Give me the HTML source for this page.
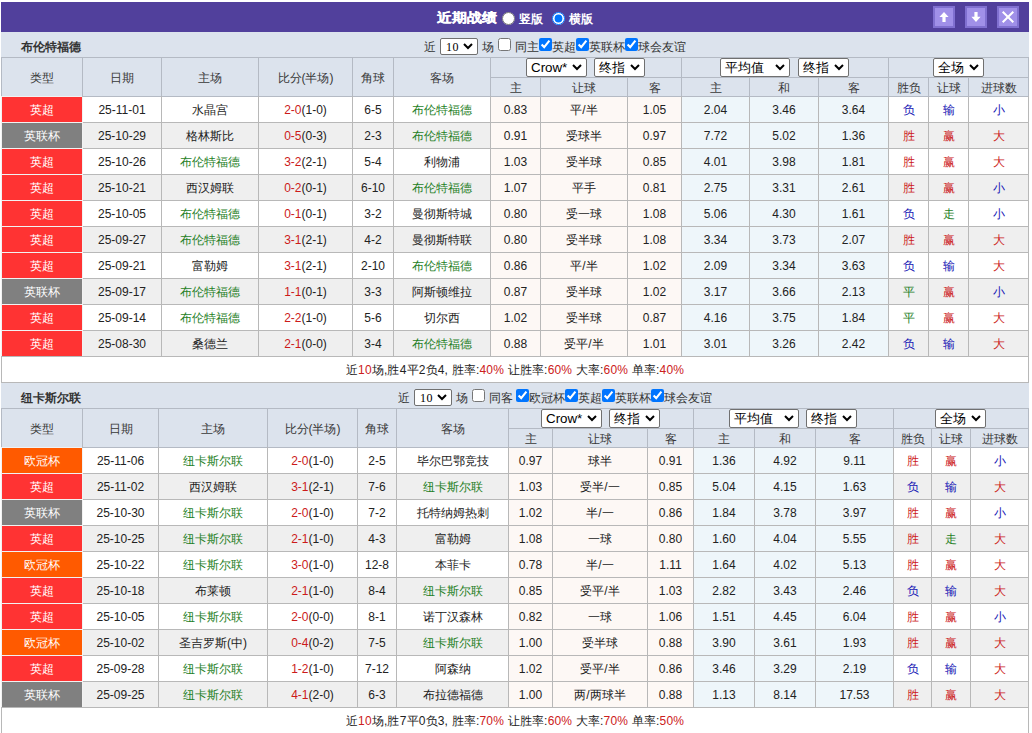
<!DOCTYPE html><html><head><meta charset="utf-8"><style>

*{box-sizing:border-box}
html,body{margin:0;padding:0;background:#fff}
body{width:1032px;height:733px;overflow:hidden;position:relative;font-family:"Liberation Sans",sans-serif;font-size:12px;color:#222}
.top{position:absolute;left:1px;top:2px;width:1028px;height:30px;background:#51409c;color:#fff}
.ttl{position:absolute;left:436px;top:1px;height:30px;line-height:30px;font-size:15px;font-weight:bold;white-space:nowrap;transform:scaleY(0.87);-webkit-text-stroke:0.3px #fff}
.rad{position:absolute;top:9px;white-space:nowrap;line-height:17px;font-size:12px;font-weight:bold}
.rad input{margin:0 1px 0 0;width:13px;height:13px;vertical-align:-2px}
.btn{position:absolute;top:4px;width:22px;height:22px;background:#a090e8;border:2px solid #8070d0}
.btn svg{position:absolute;left:0;top:0}
.sh{position:absolute;left:1px;width:1028px;height:25px;background:#dce3ed}
.tm{position:absolute;left:20px;top:8px;line-height:14px;font-weight:bold;color:#333}
.flt{position:absolute;top:6px;white-space:nowrap;line-height:17px;color:#333}
.flt input{margin:0;width:13px;height:13px;vertical-align:0;position:relative;top:0}
.flt input.cu{margin-left:1px}
.hb{position:absolute;left:1px;width:1028px;background:#dce3ed}
.c{position:absolute;text-align:center;white-space:nowrap;overflow:hidden;padding-top:1px}
.h{color:#383838}
.b{position:absolute;background:#b8b8b8}
.grp{position:absolute;height:19px;text-align:center;white-space:nowrap;padding-top:1px}
.sel{position:absolute;background:#fff;border:1px solid #707070;border-radius:2px;color:#000;white-space:nowrap;text-align:left}
.chev{position:absolute;right:4px}
select{font-family:"Liberation Sans",sans-serif;font-size:13px;height:18px;padding:0;margin:0;vertical-align:top;background:#fff;color:#000}
select.n{width:38px;height:17px;font-size:12px}
.lg{color:#fff}
.r{background:#ff3333}.g{background:#808080}.o{background:#ff5a00}
.gn{color:#1f7f1f}
i{font-style:normal;color:#cc1a1a}
.cw{background:#fdf8f5}
.av{background:#eef6fa}
.rd{color:#cc1a1a}.bl{color:#1414b4}.gr{color:#1f7f1f}
.sm{background:#fff}
.sm b{font-weight:normal;color:#cc2020}
.sm{letter-spacing:0.18px}

</style></head><body>
<div class="top"><div class="ttl">近期战绩</div>
<div class="rad" style="left:501px"><input type="radio" name="v"> 竖版</div>
<div class="rad" style="left:551px"><input type="radio" name="v" checked> 横版</div>
<div class="btn" style="left:932px"><svg width="18" height="18" viewBox="0 0 18 18"><path d="M9 3.9 L13.6 9.1 L10.6 9.1 L10.6 14 L7.4 14 L7.4 9.1 L4.4 9.1 Z" fill="#fff"/></svg></div><div class="btn" style="left:964px"><svg width="18" height="18" viewBox="0 0 18 18"><path d="M9 14 L13.6 8.8 L10.6 8.8 L10.6 3.9 L7.4 3.9 L7.4 8.8 L4.4 8.8 Z" fill="#fff"/></svg></div><div class="btn" style="left:996px"><svg width="18" height="18" viewBox="0 0 18 18"><path d="M3.7 3.7 L14.3 14.3 M14.3 3.7 L3.7 14.3" stroke="#fff" stroke-width="2"/></svg></div>
</div>
<div class="sh" style="top:32px"><span class="tm">布伦特福德</span><div class="flt" style="left:423px">近<span style="display:inline-block;width:46px"></span>场 <input type="checkbox" class="cu"> 同主<input type="checkbox" checked>英超<input type="checkbox" checked>英联杯<input type="checkbox" checked>球会友谊</div></div>
<div class="sel" style="left:440px;top:38px;width:38px;height:17px;line-height:15px;font-size:12px;padding-left:5px;font-family:'Liberation Serif',serif"><span style="position:relative;top:1px;letter-spacing:0.6px">10</span><svg class="chev" width="10" height="7" viewBox="0 0 10 7" style="top:4px"><path d="M1 1 L5 5 L9 1" stroke="#000" stroke-width="2" fill="none"/></svg></div>
<div class="hb" style="top:57px;height:39px"></div>
<div class="c h" style="left:2px;top:58px;width:80px;height:38px;line-height:38px">类型</div>
<div class="c h" style="left:83px;top:58px;width:78px;height:38px;line-height:38px">日期</div>
<div class="c h" style="left:162px;top:58px;width:96px;height:38px;line-height:38px">主场</div>
<div class="c h" style="left:259px;top:58px;width:93px;height:38px;line-height:38px">比分(半场)</div>
<div class="c h" style="left:353px;top:58px;width:40px;height:38px;line-height:38px">角球</div>
<div class="c h" style="left:394px;top:58px;width:96px;height:38px;line-height:38px">客场</div>
<div class="sel" style="left:526px;top:58px;width:61px;height:19px;line-height:17px;font-size:13.33px;padding-left:4px">Crow*<svg class="chev" width="10" height="7" viewBox="0 0 10 7" style="top:5px"><path d="M1 1 L5 5 L9 1" stroke="#000" stroke-width="2" fill="none"/></svg></div>
<div class="sel" style="left:594px;top:58px;width:51px;height:19px;line-height:17px;font-size:13.33px;padding-left:4px">终指<svg class="chev" width="10" height="7" viewBox="0 0 10 7" style="top:5px"><path d="M1 1 L5 5 L9 1" stroke="#000" stroke-width="2" fill="none"/></svg></div>
<div class="sel" style="left:720px;top:58px;width:70px;height:19px;line-height:17px;font-size:13.33px;padding-left:4px">平均值<svg class="chev" width="10" height="7" viewBox="0 0 10 7" style="top:5px"><path d="M1 1 L5 5 L9 1" stroke="#000" stroke-width="2" fill="none"/></svg></div>
<div class="sel" style="left:798px;top:58px;width:51px;height:19px;line-height:17px;font-size:13.33px;padding-left:4px">终指<svg class="chev" width="10" height="7" viewBox="0 0 10 7" style="top:5px"><path d="M1 1 L5 5 L9 1" stroke="#000" stroke-width="2" fill="none"/></svg></div>
<div class="sel" style="left:933px;top:58px;width:51px;height:19px;line-height:17px;font-size:13.33px;padding-left:4px">全场<svg class="chev" width="10" height="7" viewBox="0 0 10 7" style="top:5px"><path d="M1 1 L5 5 L9 1" stroke="#000" stroke-width="2" fill="none"/></svg></div>
<div class="c h" style="left:491px;top:78px;width:49px;height:18px;line-height:18px">主</div>
<div class="c h" style="left:541px;top:78px;width:86px;height:18px;line-height:18px">让球</div>
<div class="c h" style="left:628px;top:78px;width:53px;height:18px;line-height:18px">客</div>
<div class="c h" style="left:682px;top:78px;width:67px;height:18px;line-height:18px">主</div>
<div class="c h" style="left:750px;top:78px;width:68px;height:18px;line-height:18px">和</div>
<div class="c h" style="left:819px;top:78px;width:69px;height:18px;line-height:18px">客</div>
<div class="c h" style="left:889px;top:78px;width:39px;height:18px;line-height:18px">胜负</div>
<div class="c h" style="left:929px;top:78px;width:39px;height:18px;line-height:18px">让球</div>
<div class="c h" style="left:969px;top:78px;width:59px;height:18px;line-height:18px">进球数</div>
<div class="c lg r" style="left:2px;top:97px;width:80px;height:25px;line-height:25px">英超</div>
<div class="c" style="left:83px;top:97px;width:78px;height:25px;line-height:25px">25-11-01</div>
<div class="c" style="left:162px;top:97px;width:96px;height:25px;line-height:25px">水晶宫</div>
<div class="c" style="left:259px;top:97px;width:93px;height:25px;line-height:25px"><i>2-0</i>(1-0)</div>
<div class="c" style="left:353px;top:97px;width:40px;height:25px;line-height:25px">6-5</div>
<div class="c gn" style="left:394px;top:97px;width:96px;height:25px;line-height:25px">布伦特福德</div>
<div class="c cw" style="left:491px;top:97px;width:49px;height:25px;line-height:25px">0.83</div>
<div class="c cw" style="left:541px;top:97px;width:86px;height:25px;line-height:25px">平/半</div>
<div class="c cw" style="left:628px;top:97px;width:53px;height:25px;line-height:25px">1.05</div>
<div class="c av" style="left:682px;top:97px;width:67px;height:25px;line-height:25px">2.04</div>
<div class="c av" style="left:750px;top:97px;width:68px;height:25px;line-height:25px">3.46</div>
<div class="c av" style="left:819px;top:97px;width:69px;height:25px;line-height:25px">3.64</div>
<div class="c rs bl" style="left:889px;top:97px;width:39px;height:25px;line-height:25px">负</div>
<div class="c rs bl" style="left:929px;top:97px;width:39px;height:25px;line-height:25px">输</div>
<div class="c rs bl" style="left:969px;top:97px;width:59px;height:25px;line-height:25px">小</div>
<div class="c lg g" style="left:2px;top:123px;width:80px;height:25px;line-height:25px">英联杯</div>
<div class="c" style="left:83px;top:123px;width:78px;height:25px;line-height:25px;background:#efefef">25-10-29</div>
<div class="c" style="left:162px;top:123px;width:96px;height:25px;line-height:25px;background:#efefef">格林斯比</div>
<div class="c" style="left:259px;top:123px;width:93px;height:25px;line-height:25px;background:#efefef"><i>0-5</i>(0-3)</div>
<div class="c" style="left:353px;top:123px;width:40px;height:25px;line-height:25px;background:#efefef">2-3</div>
<div class="c gn" style="left:394px;top:123px;width:96px;height:25px;line-height:25px;background:#efefef">布伦特福德</div>
<div class="c cw" style="left:491px;top:123px;width:49px;height:25px;line-height:25px">0.91</div>
<div class="c cw" style="left:541px;top:123px;width:86px;height:25px;line-height:25px">受球半</div>
<div class="c cw" style="left:628px;top:123px;width:53px;height:25px;line-height:25px">0.97</div>
<div class="c av" style="left:682px;top:123px;width:67px;height:25px;line-height:25px">7.72</div>
<div class="c av" style="left:750px;top:123px;width:68px;height:25px;line-height:25px">5.02</div>
<div class="c av" style="left:819px;top:123px;width:69px;height:25px;line-height:25px">1.36</div>
<div class="c rs rd" style="left:889px;top:123px;width:39px;height:25px;line-height:25px;background:#efefef">胜</div>
<div class="c rs rd" style="left:929px;top:123px;width:39px;height:25px;line-height:25px;background:#efefef">赢</div>
<div class="c rs rd" style="left:969px;top:123px;width:59px;height:25px;line-height:25px;background:#efefef">大</div>
<div class="c lg r" style="left:2px;top:149px;width:80px;height:25px;line-height:25px">英超</div>
<div class="c" style="left:83px;top:149px;width:78px;height:25px;line-height:25px">25-10-26</div>
<div class="c gn" style="left:162px;top:149px;width:96px;height:25px;line-height:25px">布伦特福德</div>
<div class="c" style="left:259px;top:149px;width:93px;height:25px;line-height:25px"><i>3-2</i>(2-1)</div>
<div class="c" style="left:353px;top:149px;width:40px;height:25px;line-height:25px">5-4</div>
<div class="c" style="left:394px;top:149px;width:96px;height:25px;line-height:25px">利物浦</div>
<div class="c cw" style="left:491px;top:149px;width:49px;height:25px;line-height:25px">1.03</div>
<div class="c cw" style="left:541px;top:149px;width:86px;height:25px;line-height:25px">受半球</div>
<div class="c cw" style="left:628px;top:149px;width:53px;height:25px;line-height:25px">0.85</div>
<div class="c av" style="left:682px;top:149px;width:67px;height:25px;line-height:25px">4.01</div>
<div class="c av" style="left:750px;top:149px;width:68px;height:25px;line-height:25px">3.98</div>
<div class="c av" style="left:819px;top:149px;width:69px;height:25px;line-height:25px">1.81</div>
<div class="c rs rd" style="left:889px;top:149px;width:39px;height:25px;line-height:25px">胜</div>
<div class="c rs rd" style="left:929px;top:149px;width:39px;height:25px;line-height:25px">赢</div>
<div class="c rs rd" style="left:969px;top:149px;width:59px;height:25px;line-height:25px">大</div>
<div class="c lg r" style="left:2px;top:175px;width:80px;height:25px;line-height:25px">英超</div>
<div class="c" style="left:83px;top:175px;width:78px;height:25px;line-height:25px;background:#efefef">25-10-21</div>
<div class="c" style="left:162px;top:175px;width:96px;height:25px;line-height:25px;background:#efefef">西汉姆联</div>
<div class="c" style="left:259px;top:175px;width:93px;height:25px;line-height:25px;background:#efefef"><i>0-2</i>(0-1)</div>
<div class="c" style="left:353px;top:175px;width:40px;height:25px;line-height:25px;background:#efefef">6-10</div>
<div class="c gn" style="left:394px;top:175px;width:96px;height:25px;line-height:25px;background:#efefef">布伦特福德</div>
<div class="c cw" style="left:491px;top:175px;width:49px;height:25px;line-height:25px">1.07</div>
<div class="c cw" style="left:541px;top:175px;width:86px;height:25px;line-height:25px">平手</div>
<div class="c cw" style="left:628px;top:175px;width:53px;height:25px;line-height:25px">0.81</div>
<div class="c av" style="left:682px;top:175px;width:67px;height:25px;line-height:25px">2.75</div>
<div class="c av" style="left:750px;top:175px;width:68px;height:25px;line-height:25px">3.31</div>
<div class="c av" style="left:819px;top:175px;width:69px;height:25px;line-height:25px">2.61</div>
<div class="c rs rd" style="left:889px;top:175px;width:39px;height:25px;line-height:25px;background:#efefef">胜</div>
<div class="c rs rd" style="left:929px;top:175px;width:39px;height:25px;line-height:25px;background:#efefef">赢</div>
<div class="c rs bl" style="left:969px;top:175px;width:59px;height:25px;line-height:25px;background:#efefef">小</div>
<div class="c lg r" style="left:2px;top:201px;width:80px;height:25px;line-height:25px">英超</div>
<div class="c" style="left:83px;top:201px;width:78px;height:25px;line-height:25px">25-10-05</div>
<div class="c gn" style="left:162px;top:201px;width:96px;height:25px;line-height:25px">布伦特福德</div>
<div class="c" style="left:259px;top:201px;width:93px;height:25px;line-height:25px"><i>0-1</i>(0-1)</div>
<div class="c" style="left:353px;top:201px;width:40px;height:25px;line-height:25px">3-2</div>
<div class="c" style="left:394px;top:201px;width:96px;height:25px;line-height:25px">曼彻斯特城</div>
<div class="c cw" style="left:491px;top:201px;width:49px;height:25px;line-height:25px">0.80</div>
<div class="c cw" style="left:541px;top:201px;width:86px;height:25px;line-height:25px">受一球</div>
<div class="c cw" style="left:628px;top:201px;width:53px;height:25px;line-height:25px">1.08</div>
<div class="c av" style="left:682px;top:201px;width:67px;height:25px;line-height:25px">5.06</div>
<div class="c av" style="left:750px;top:201px;width:68px;height:25px;line-height:25px">4.30</div>
<div class="c av" style="left:819px;top:201px;width:69px;height:25px;line-height:25px">1.61</div>
<div class="c rs bl" style="left:889px;top:201px;width:39px;height:25px;line-height:25px">负</div>
<div class="c rs gr" style="left:929px;top:201px;width:39px;height:25px;line-height:25px">走</div>
<div class="c rs bl" style="left:969px;top:201px;width:59px;height:25px;line-height:25px">小</div>
<div class="c lg r" style="left:2px;top:227px;width:80px;height:25px;line-height:25px">英超</div>
<div class="c" style="left:83px;top:227px;width:78px;height:25px;line-height:25px;background:#efefef">25-09-27</div>
<div class="c gn" style="left:162px;top:227px;width:96px;height:25px;line-height:25px;background:#efefef">布伦特福德</div>
<div class="c" style="left:259px;top:227px;width:93px;height:25px;line-height:25px;background:#efefef"><i>3-1</i>(2-1)</div>
<div class="c" style="left:353px;top:227px;width:40px;height:25px;line-height:25px;background:#efefef">4-2</div>
<div class="c" style="left:394px;top:227px;width:96px;height:25px;line-height:25px;background:#efefef">曼彻斯特联</div>
<div class="c cw" style="left:491px;top:227px;width:49px;height:25px;line-height:25px">0.80</div>
<div class="c cw" style="left:541px;top:227px;width:86px;height:25px;line-height:25px">受半球</div>
<div class="c cw" style="left:628px;top:227px;width:53px;height:25px;line-height:25px">1.08</div>
<div class="c av" style="left:682px;top:227px;width:67px;height:25px;line-height:25px">3.34</div>
<div class="c av" style="left:750px;top:227px;width:68px;height:25px;line-height:25px">3.73</div>
<div class="c av" style="left:819px;top:227px;width:69px;height:25px;line-height:25px">2.07</div>
<div class="c rs rd" style="left:889px;top:227px;width:39px;height:25px;line-height:25px;background:#efefef">胜</div>
<div class="c rs rd" style="left:929px;top:227px;width:39px;height:25px;line-height:25px;background:#efefef">赢</div>
<div class="c rs rd" style="left:969px;top:227px;width:59px;height:25px;line-height:25px;background:#efefef">大</div>
<div class="c lg r" style="left:2px;top:253px;width:80px;height:25px;line-height:25px">英超</div>
<div class="c" style="left:83px;top:253px;width:78px;height:25px;line-height:25px">25-09-21</div>
<div class="c" style="left:162px;top:253px;width:96px;height:25px;line-height:25px">富勒姆</div>
<div class="c" style="left:259px;top:253px;width:93px;height:25px;line-height:25px"><i>3-1</i>(2-1)</div>
<div class="c" style="left:353px;top:253px;width:40px;height:25px;line-height:25px">2-10</div>
<div class="c gn" style="left:394px;top:253px;width:96px;height:25px;line-height:25px">布伦特福德</div>
<div class="c cw" style="left:491px;top:253px;width:49px;height:25px;line-height:25px">0.86</div>
<div class="c cw" style="left:541px;top:253px;width:86px;height:25px;line-height:25px">平/半</div>
<div class="c cw" style="left:628px;top:253px;width:53px;height:25px;line-height:25px">1.02</div>
<div class="c av" style="left:682px;top:253px;width:67px;height:25px;line-height:25px">2.09</div>
<div class="c av" style="left:750px;top:253px;width:68px;height:25px;line-height:25px">3.34</div>
<div class="c av" style="left:819px;top:253px;width:69px;height:25px;line-height:25px">3.63</div>
<div class="c rs bl" style="left:889px;top:253px;width:39px;height:25px;line-height:25px">负</div>
<div class="c rs bl" style="left:929px;top:253px;width:39px;height:25px;line-height:25px">输</div>
<div class="c rs rd" style="left:969px;top:253px;width:59px;height:25px;line-height:25px">大</div>
<div class="c lg g" style="left:2px;top:279px;width:80px;height:25px;line-height:25px">英联杯</div>
<div class="c" style="left:83px;top:279px;width:78px;height:25px;line-height:25px;background:#efefef">25-09-17</div>
<div class="c gn" style="left:162px;top:279px;width:96px;height:25px;line-height:25px;background:#efefef">布伦特福德</div>
<div class="c" style="left:259px;top:279px;width:93px;height:25px;line-height:25px;background:#efefef"><i>1-1</i>(0-1)</div>
<div class="c" style="left:353px;top:279px;width:40px;height:25px;line-height:25px;background:#efefef">3-3</div>
<div class="c" style="left:394px;top:279px;width:96px;height:25px;line-height:25px;background:#efefef">阿斯顿维拉</div>
<div class="c cw" style="left:491px;top:279px;width:49px;height:25px;line-height:25px">0.87</div>
<div class="c cw" style="left:541px;top:279px;width:86px;height:25px;line-height:25px">受半球</div>
<div class="c cw" style="left:628px;top:279px;width:53px;height:25px;line-height:25px">1.02</div>
<div class="c av" style="left:682px;top:279px;width:67px;height:25px;line-height:25px">3.17</div>
<div class="c av" style="left:750px;top:279px;width:68px;height:25px;line-height:25px">3.66</div>
<div class="c av" style="left:819px;top:279px;width:69px;height:25px;line-height:25px">2.13</div>
<div class="c rs gr" style="left:889px;top:279px;width:39px;height:25px;line-height:25px;background:#efefef">平</div>
<div class="c rs rd" style="left:929px;top:279px;width:39px;height:25px;line-height:25px;background:#efefef">赢</div>
<div class="c rs bl" style="left:969px;top:279px;width:59px;height:25px;line-height:25px;background:#efefef">小</div>
<div class="c lg r" style="left:2px;top:305px;width:80px;height:25px;line-height:25px">英超</div>
<div class="c" style="left:83px;top:305px;width:78px;height:25px;line-height:25px">25-09-14</div>
<div class="c gn" style="left:162px;top:305px;width:96px;height:25px;line-height:25px">布伦特福德</div>
<div class="c" style="left:259px;top:305px;width:93px;height:25px;line-height:25px"><i>2-2</i>(1-0)</div>
<div class="c" style="left:353px;top:305px;width:40px;height:25px;line-height:25px">5-6</div>
<div class="c" style="left:394px;top:305px;width:96px;height:25px;line-height:25px">切尔西</div>
<div class="c cw" style="left:491px;top:305px;width:49px;height:25px;line-height:25px">1.02</div>
<div class="c cw" style="left:541px;top:305px;width:86px;height:25px;line-height:25px">受半球</div>
<div class="c cw" style="left:628px;top:305px;width:53px;height:25px;line-height:25px">0.87</div>
<div class="c av" style="left:682px;top:305px;width:67px;height:25px;line-height:25px">4.16</div>
<div class="c av" style="left:750px;top:305px;width:68px;height:25px;line-height:25px">3.75</div>
<div class="c av" style="left:819px;top:305px;width:69px;height:25px;line-height:25px">1.84</div>
<div class="c rs gr" style="left:889px;top:305px;width:39px;height:25px;line-height:25px">平</div>
<div class="c rs rd" style="left:929px;top:305px;width:39px;height:25px;line-height:25px">赢</div>
<div class="c rs rd" style="left:969px;top:305px;width:59px;height:25px;line-height:25px">大</div>
<div class="c lg r" style="left:2px;top:331px;width:80px;height:25px;line-height:25px">英超</div>
<div class="c" style="left:83px;top:331px;width:78px;height:25px;line-height:25px;background:#efefef">25-08-30</div>
<div class="c" style="left:162px;top:331px;width:96px;height:25px;line-height:25px;background:#efefef">桑德兰</div>
<div class="c" style="left:259px;top:331px;width:93px;height:25px;line-height:25px;background:#efefef"><i>2-1</i>(0-0)</div>
<div class="c" style="left:353px;top:331px;width:40px;height:25px;line-height:25px;background:#efefef">3-4</div>
<div class="c gn" style="left:394px;top:331px;width:96px;height:25px;line-height:25px;background:#efefef">布伦特福德</div>
<div class="c cw" style="left:491px;top:331px;width:49px;height:25px;line-height:25px">0.88</div>
<div class="c cw" style="left:541px;top:331px;width:86px;height:25px;line-height:25px">受平/半</div>
<div class="c cw" style="left:628px;top:331px;width:53px;height:25px;line-height:25px">1.01</div>
<div class="c av" style="left:682px;top:331px;width:67px;height:25px;line-height:25px">3.01</div>
<div class="c av" style="left:750px;top:331px;width:68px;height:25px;line-height:25px">3.26</div>
<div class="c av" style="left:819px;top:331px;width:69px;height:25px;line-height:25px">2.42</div>
<div class="c rs bl" style="left:889px;top:331px;width:39px;height:25px;line-height:25px;background:#efefef">负</div>
<div class="c rs bl" style="left:929px;top:331px;width:39px;height:25px;line-height:25px;background:#efefef">输</div>
<div class="c rs rd" style="left:969px;top:331px;width:59px;height:25px;line-height:25px;background:#efefef">大</div>
<div class="c sm" style="left:2px;top:357px;width:1026px;height:25px;line-height:25px">近<b>10</b>场,胜4平2负4, 胜率:<b>40%</b> 让胜率:<b>60%</b> 大率:<b>60%</b> 单率:<b>40%</b></div>
<div class="b" style="left:1px;top:57px;width:1028px;height:1px;background:#b4bac4"></div>
<div class="b" style="left:490px;top:77px;width:539px;height:1px;background:#b4bac4"></div>
<div class="b" style="left:82px;top:96px;width:947px;height:1px;background:#b4bac4"></div>
<div class="b" style="left:1px;top:96px;width:81px;height:1px;background:#f2f2f2"></div>
<div class="b" style="left:82px;top:122px;width:947px;height:1px"></div>
<div class="b" style="left:1px;top:122px;width:81px;height:1px;background:#f2f2f2"></div>
<div class="b" style="left:82px;top:148px;width:947px;height:1px"></div>
<div class="b" style="left:1px;top:148px;width:81px;height:1px;background:#f2f2f2"></div>
<div class="b" style="left:82px;top:174px;width:947px;height:1px"></div>
<div class="b" style="left:1px;top:174px;width:81px;height:1px;background:#f2f2f2"></div>
<div class="b" style="left:82px;top:200px;width:947px;height:1px"></div>
<div class="b" style="left:1px;top:200px;width:81px;height:1px;background:#f2f2f2"></div>
<div class="b" style="left:82px;top:226px;width:947px;height:1px"></div>
<div class="b" style="left:1px;top:226px;width:81px;height:1px;background:#f2f2f2"></div>
<div class="b" style="left:82px;top:252px;width:947px;height:1px"></div>
<div class="b" style="left:1px;top:252px;width:81px;height:1px;background:#f2f2f2"></div>
<div class="b" style="left:82px;top:278px;width:947px;height:1px"></div>
<div class="b" style="left:1px;top:278px;width:81px;height:1px;background:#f2f2f2"></div>
<div class="b" style="left:82px;top:304px;width:947px;height:1px"></div>
<div class="b" style="left:1px;top:304px;width:81px;height:1px;background:#f2f2f2"></div>
<div class="b" style="left:82px;top:330px;width:947px;height:1px"></div>
<div class="b" style="left:1px;top:330px;width:81px;height:1px;background:#f2f2f2"></div>
<div class="b" style="left:1px;top:356px;width:1028px;height:1px"></div>
<div class="b" style="left:1px;top:382px;width:1028px;height:1px"></div>
<div class="b" style="left:1px;top:57px;width:1px;height:39px;background:#b4bac4"></div>
<div class="b" style="left:1px;top:356px;width:1px;height:27px"></div>
<div class="b" style="left:1px;top:96px;width:1px;height:260px;background:#f2f2f2"></div>
<div class="b" style="left:82px;top:57px;width:1px;height:39px;background:#b4bac4"></div>
<div class="b" style="left:82px;top:96px;width:1px;height:1px"></div>
<div class="b" style="left:82px;top:356px;width:1px;height:1px"></div>
<div class="b" style="left:82px;top:97px;width:1px;height:259px;background:#f2f2f2"></div>
<div class="b" style="left:161px;top:57px;width:1px;height:39px;background:#b4bac4"></div>
<div class="b" style="left:161px;top:96px;width:1px;height:261px"></div>
<div class="b" style="left:258px;top:57px;width:1px;height:39px;background:#b4bac4"></div>
<div class="b" style="left:258px;top:96px;width:1px;height:261px"></div>
<div class="b" style="left:352px;top:57px;width:1px;height:39px;background:#b4bac4"></div>
<div class="b" style="left:352px;top:96px;width:1px;height:261px"></div>
<div class="b" style="left:393px;top:57px;width:1px;height:39px;background:#b4bac4"></div>
<div class="b" style="left:393px;top:96px;width:1px;height:261px"></div>
<div class="b" style="left:490px;top:57px;width:1px;height:39px;background:#b4bac4"></div>
<div class="b" style="left:490px;top:96px;width:1px;height:261px"></div>
<div class="b" style="left:540px;top:78px;width:1px;height:18px;background:#b4bac4"></div>
<div class="b" style="left:540px;top:97px;width:1px;height:260px"></div>
<div class="b" style="left:627px;top:78px;width:1px;height:18px;background:#b4bac4"></div>
<div class="b" style="left:627px;top:97px;width:1px;height:260px"></div>
<div class="b" style="left:681px;top:57px;width:1px;height:39px;background:#b4bac4"></div>
<div class="b" style="left:681px;top:96px;width:1px;height:261px"></div>
<div class="b" style="left:749px;top:78px;width:1px;height:18px;background:#b4bac4"></div>
<div class="b" style="left:749px;top:97px;width:1px;height:260px"></div>
<div class="b" style="left:818px;top:78px;width:1px;height:18px;background:#b4bac4"></div>
<div class="b" style="left:818px;top:97px;width:1px;height:260px"></div>
<div class="b" style="left:888px;top:57px;width:1px;height:39px;background:#b4bac4"></div>
<div class="b" style="left:888px;top:96px;width:1px;height:261px"></div>
<div class="b" style="left:928px;top:78px;width:1px;height:18px;background:#b4bac4"></div>
<div class="b" style="left:928px;top:97px;width:1px;height:260px"></div>
<div class="b" style="left:968px;top:78px;width:1px;height:18px;background:#b4bac4"></div>
<div class="b" style="left:968px;top:97px;width:1px;height:260px"></div>
<div class="b" style="left:1028px;top:57px;width:1px;height:39px;background:#b4bac4"></div>
<div class="b" style="left:1028px;top:96px;width:1px;height:287px"></div>
<div class="sh" style="top:383px"><span class="tm">纽卡斯尔联</span><div class="flt" style="left:397px">近<span style="display:inline-block;width:46px"></span>场 <input type="checkbox" class="cu"> 同客 <input type="checkbox" checked>欧冠杯<input type="checkbox" checked>英超<input type="checkbox" checked>英联杯<input type="checkbox" checked>球会友谊</div></div>
<div class="sel" style="left:414px;top:389px;width:38px;height:17px;line-height:15px;font-size:12px;padding-left:5px;font-family:'Liberation Serif',serif"><span style="position:relative;top:1px;letter-spacing:0.6px">10</span><svg class="chev" width="10" height="7" viewBox="0 0 10 7" style="top:4px"><path d="M1 1 L5 5 L9 1" stroke="#000" stroke-width="2" fill="none"/></svg></div>
<div class="hb" style="top:408px;height:39px"></div>
<div class="c h" style="left:2px;top:409px;width:80px;height:38px;line-height:38px">类型</div>
<div class="c h" style="left:83px;top:409px;width:75px;height:38px;line-height:38px">日期</div>
<div class="c h" style="left:159px;top:409px;width:108px;height:38px;line-height:38px">主场</div>
<div class="c h" style="left:268px;top:409px;width:89px;height:38px;line-height:38px">比分(半场)</div>
<div class="c h" style="left:358px;top:409px;width:38px;height:38px;line-height:38px">角球</div>
<div class="c h" style="left:397px;top:409px;width:111px;height:38px;line-height:38px">客场</div>
<div class="sel" style="left:541px;top:409px;width:61px;height:19px;line-height:17px;font-size:13.33px;padding-left:4px">Crow*<svg class="chev" width="10" height="7" viewBox="0 0 10 7" style="top:5px"><path d="M1 1 L5 5 L9 1" stroke="#000" stroke-width="2" fill="none"/></svg></div>
<div class="sel" style="left:609px;top:409px;width:51px;height:19px;line-height:17px;font-size:13.33px;padding-left:4px">终指<svg class="chev" width="10" height="7" viewBox="0 0 10 7" style="top:5px"><path d="M1 1 L5 5 L9 1" stroke="#000" stroke-width="2" fill="none"/></svg></div>
<div class="sel" style="left:729px;top:409px;width:70px;height:19px;line-height:17px;font-size:13.33px;padding-left:4px">平均值<svg class="chev" width="10" height="7" viewBox="0 0 10 7" style="top:5px"><path d="M1 1 L5 5 L9 1" stroke="#000" stroke-width="2" fill="none"/></svg></div>
<div class="sel" style="left:806px;top:409px;width:51px;height:19px;line-height:17px;font-size:13.33px;padding-left:4px">终指<svg class="chev" width="10" height="7" viewBox="0 0 10 7" style="top:5px"><path d="M1 1 L5 5 L9 1" stroke="#000" stroke-width="2" fill="none"/></svg></div>
<div class="sel" style="left:935px;top:409px;width:51px;height:19px;line-height:17px;font-size:13.33px;padding-left:4px">全场<svg class="chev" width="10" height="7" viewBox="0 0 10 7" style="top:5px"><path d="M1 1 L5 5 L9 1" stroke="#000" stroke-width="2" fill="none"/></svg></div>
<div class="c h" style="left:509px;top:429px;width:43px;height:18px;line-height:18px">主</div>
<div class="c h" style="left:553px;top:429px;width:94px;height:18px;line-height:18px">让球</div>
<div class="c h" style="left:648px;top:429px;width:45px;height:18px;line-height:18px">客</div>
<div class="c h" style="left:694px;top:429px;width:60px;height:18px;line-height:18px">主</div>
<div class="c h" style="left:755px;top:429px;width:60px;height:18px;line-height:18px">和</div>
<div class="c h" style="left:816px;top:429px;width:77px;height:18px;line-height:18px">客</div>
<div class="c h" style="left:894px;top:429px;width:37px;height:18px;line-height:18px">胜负</div>
<div class="c h" style="left:932px;top:429px;width:38px;height:18px;line-height:18px">让球</div>
<div class="c h" style="left:971px;top:429px;width:57px;height:18px;line-height:18px">进球数</div>
<div class="c lg o" style="left:2px;top:448px;width:80px;height:25px;line-height:25px">欧冠杯</div>
<div class="c" style="left:83px;top:448px;width:75px;height:25px;line-height:25px">25-11-06</div>
<div class="c gn" style="left:159px;top:448px;width:108px;height:25px;line-height:25px">纽卡斯尔联</div>
<div class="c" style="left:268px;top:448px;width:89px;height:25px;line-height:25px"><i>2-0</i>(1-0)</div>
<div class="c" style="left:358px;top:448px;width:38px;height:25px;line-height:25px">2-5</div>
<div class="c" style="left:397px;top:448px;width:111px;height:25px;line-height:25px">毕尔巴鄂竞技</div>
<div class="c cw" style="left:509px;top:448px;width:43px;height:25px;line-height:25px">0.97</div>
<div class="c cw" style="left:553px;top:448px;width:94px;height:25px;line-height:25px">球半</div>
<div class="c cw" style="left:648px;top:448px;width:45px;height:25px;line-height:25px">0.91</div>
<div class="c av" style="left:694px;top:448px;width:60px;height:25px;line-height:25px">1.36</div>
<div class="c av" style="left:755px;top:448px;width:60px;height:25px;line-height:25px">4.92</div>
<div class="c av" style="left:816px;top:448px;width:77px;height:25px;line-height:25px">9.11</div>
<div class="c rs rd" style="left:894px;top:448px;width:37px;height:25px;line-height:25px">胜</div>
<div class="c rs rd" style="left:932px;top:448px;width:38px;height:25px;line-height:25px">赢</div>
<div class="c rs bl" style="left:971px;top:448px;width:57px;height:25px;line-height:25px">小</div>
<div class="c lg r" style="left:2px;top:474px;width:80px;height:25px;line-height:25px">英超</div>
<div class="c" style="left:83px;top:474px;width:75px;height:25px;line-height:25px;background:#efefef">25-11-02</div>
<div class="c" style="left:159px;top:474px;width:108px;height:25px;line-height:25px;background:#efefef">西汉姆联</div>
<div class="c" style="left:268px;top:474px;width:89px;height:25px;line-height:25px;background:#efefef"><i>3-1</i>(2-1)</div>
<div class="c" style="left:358px;top:474px;width:38px;height:25px;line-height:25px;background:#efefef">7-6</div>
<div class="c gn" style="left:397px;top:474px;width:111px;height:25px;line-height:25px;background:#efefef">纽卡斯尔联</div>
<div class="c cw" style="left:509px;top:474px;width:43px;height:25px;line-height:25px">1.03</div>
<div class="c cw" style="left:553px;top:474px;width:94px;height:25px;line-height:25px">受半/一</div>
<div class="c cw" style="left:648px;top:474px;width:45px;height:25px;line-height:25px">0.85</div>
<div class="c av" style="left:694px;top:474px;width:60px;height:25px;line-height:25px">5.04</div>
<div class="c av" style="left:755px;top:474px;width:60px;height:25px;line-height:25px">4.15</div>
<div class="c av" style="left:816px;top:474px;width:77px;height:25px;line-height:25px">1.63</div>
<div class="c rs bl" style="left:894px;top:474px;width:37px;height:25px;line-height:25px;background:#efefef">负</div>
<div class="c rs bl" style="left:932px;top:474px;width:38px;height:25px;line-height:25px;background:#efefef">输</div>
<div class="c rs rd" style="left:971px;top:474px;width:57px;height:25px;line-height:25px;background:#efefef">大</div>
<div class="c lg g" style="left:2px;top:500px;width:80px;height:25px;line-height:25px">英联杯</div>
<div class="c" style="left:83px;top:500px;width:75px;height:25px;line-height:25px">25-10-30</div>
<div class="c gn" style="left:159px;top:500px;width:108px;height:25px;line-height:25px">纽卡斯尔联</div>
<div class="c" style="left:268px;top:500px;width:89px;height:25px;line-height:25px"><i>2-0</i>(1-0)</div>
<div class="c" style="left:358px;top:500px;width:38px;height:25px;line-height:25px">7-2</div>
<div class="c" style="left:397px;top:500px;width:111px;height:25px;line-height:25px">托特纳姆热刺</div>
<div class="c cw" style="left:509px;top:500px;width:43px;height:25px;line-height:25px">1.02</div>
<div class="c cw" style="left:553px;top:500px;width:94px;height:25px;line-height:25px">半/一</div>
<div class="c cw" style="left:648px;top:500px;width:45px;height:25px;line-height:25px">0.86</div>
<div class="c av" style="left:694px;top:500px;width:60px;height:25px;line-height:25px">1.84</div>
<div class="c av" style="left:755px;top:500px;width:60px;height:25px;line-height:25px">3.78</div>
<div class="c av" style="left:816px;top:500px;width:77px;height:25px;line-height:25px">3.97</div>
<div class="c rs rd" style="left:894px;top:500px;width:37px;height:25px;line-height:25px">胜</div>
<div class="c rs rd" style="left:932px;top:500px;width:38px;height:25px;line-height:25px">赢</div>
<div class="c rs bl" style="left:971px;top:500px;width:57px;height:25px;line-height:25px">小</div>
<div class="c lg r" style="left:2px;top:526px;width:80px;height:25px;line-height:25px">英超</div>
<div class="c" style="left:83px;top:526px;width:75px;height:25px;line-height:25px;background:#efefef">25-10-25</div>
<div class="c gn" style="left:159px;top:526px;width:108px;height:25px;line-height:25px;background:#efefef">纽卡斯尔联</div>
<div class="c" style="left:268px;top:526px;width:89px;height:25px;line-height:25px;background:#efefef"><i>2-1</i>(1-0)</div>
<div class="c" style="left:358px;top:526px;width:38px;height:25px;line-height:25px;background:#efefef">4-3</div>
<div class="c" style="left:397px;top:526px;width:111px;height:25px;line-height:25px;background:#efefef">富勒姆</div>
<div class="c cw" style="left:509px;top:526px;width:43px;height:25px;line-height:25px">1.08</div>
<div class="c cw" style="left:553px;top:526px;width:94px;height:25px;line-height:25px">一球</div>
<div class="c cw" style="left:648px;top:526px;width:45px;height:25px;line-height:25px">0.80</div>
<div class="c av" style="left:694px;top:526px;width:60px;height:25px;line-height:25px">1.60</div>
<div class="c av" style="left:755px;top:526px;width:60px;height:25px;line-height:25px">4.04</div>
<div class="c av" style="left:816px;top:526px;width:77px;height:25px;line-height:25px">5.55</div>
<div class="c rs rd" style="left:894px;top:526px;width:37px;height:25px;line-height:25px;background:#efefef">胜</div>
<div class="c rs gr" style="left:932px;top:526px;width:38px;height:25px;line-height:25px;background:#efefef">走</div>
<div class="c rs rd" style="left:971px;top:526px;width:57px;height:25px;line-height:25px;background:#efefef">大</div>
<div class="c lg o" style="left:2px;top:552px;width:80px;height:25px;line-height:25px">欧冠杯</div>
<div class="c" style="left:83px;top:552px;width:75px;height:25px;line-height:25px">25-10-22</div>
<div class="c gn" style="left:159px;top:552px;width:108px;height:25px;line-height:25px">纽卡斯尔联</div>
<div class="c" style="left:268px;top:552px;width:89px;height:25px;line-height:25px"><i>3-0</i>(1-0)</div>
<div class="c" style="left:358px;top:552px;width:38px;height:25px;line-height:25px">12-8</div>
<div class="c" style="left:397px;top:552px;width:111px;height:25px;line-height:25px">本菲卡</div>
<div class="c cw" style="left:509px;top:552px;width:43px;height:25px;line-height:25px">0.78</div>
<div class="c cw" style="left:553px;top:552px;width:94px;height:25px;line-height:25px">半/一</div>
<div class="c cw" style="left:648px;top:552px;width:45px;height:25px;line-height:25px">1.11</div>
<div class="c av" style="left:694px;top:552px;width:60px;height:25px;line-height:25px">1.64</div>
<div class="c av" style="left:755px;top:552px;width:60px;height:25px;line-height:25px">4.02</div>
<div class="c av" style="left:816px;top:552px;width:77px;height:25px;line-height:25px">5.13</div>
<div class="c rs rd" style="left:894px;top:552px;width:37px;height:25px;line-height:25px">胜</div>
<div class="c rs rd" style="left:932px;top:552px;width:38px;height:25px;line-height:25px">赢</div>
<div class="c rs rd" style="left:971px;top:552px;width:57px;height:25px;line-height:25px">大</div>
<div class="c lg r" style="left:2px;top:578px;width:80px;height:25px;line-height:25px">英超</div>
<div class="c" style="left:83px;top:578px;width:75px;height:25px;line-height:25px;background:#efefef">25-10-18</div>
<div class="c" style="left:159px;top:578px;width:108px;height:25px;line-height:25px;background:#efefef">布莱顿</div>
<div class="c" style="left:268px;top:578px;width:89px;height:25px;line-height:25px;background:#efefef"><i>2-1</i>(1-0)</div>
<div class="c" style="left:358px;top:578px;width:38px;height:25px;line-height:25px;background:#efefef">8-4</div>
<div class="c gn" style="left:397px;top:578px;width:111px;height:25px;line-height:25px;background:#efefef">纽卡斯尔联</div>
<div class="c cw" style="left:509px;top:578px;width:43px;height:25px;line-height:25px">0.85</div>
<div class="c cw" style="left:553px;top:578px;width:94px;height:25px;line-height:25px">受平/半</div>
<div class="c cw" style="left:648px;top:578px;width:45px;height:25px;line-height:25px">1.03</div>
<div class="c av" style="left:694px;top:578px;width:60px;height:25px;line-height:25px">2.82</div>
<div class="c av" style="left:755px;top:578px;width:60px;height:25px;line-height:25px">3.43</div>
<div class="c av" style="left:816px;top:578px;width:77px;height:25px;line-height:25px">2.46</div>
<div class="c rs bl" style="left:894px;top:578px;width:37px;height:25px;line-height:25px;background:#efefef">负</div>
<div class="c rs bl" style="left:932px;top:578px;width:38px;height:25px;line-height:25px;background:#efefef">输</div>
<div class="c rs rd" style="left:971px;top:578px;width:57px;height:25px;line-height:25px;background:#efefef">大</div>
<div class="c lg r" style="left:2px;top:604px;width:80px;height:25px;line-height:25px">英超</div>
<div class="c" style="left:83px;top:604px;width:75px;height:25px;line-height:25px">25-10-05</div>
<div class="c gn" style="left:159px;top:604px;width:108px;height:25px;line-height:25px">纽卡斯尔联</div>
<div class="c" style="left:268px;top:604px;width:89px;height:25px;line-height:25px"><i>2-0</i>(0-0)</div>
<div class="c" style="left:358px;top:604px;width:38px;height:25px;line-height:25px">8-1</div>
<div class="c" style="left:397px;top:604px;width:111px;height:25px;line-height:25px">诺丁汉森林</div>
<div class="c cw" style="left:509px;top:604px;width:43px;height:25px;line-height:25px">0.82</div>
<div class="c cw" style="left:553px;top:604px;width:94px;height:25px;line-height:25px">一球</div>
<div class="c cw" style="left:648px;top:604px;width:45px;height:25px;line-height:25px">1.06</div>
<div class="c av" style="left:694px;top:604px;width:60px;height:25px;line-height:25px">1.51</div>
<div class="c av" style="left:755px;top:604px;width:60px;height:25px;line-height:25px">4.45</div>
<div class="c av" style="left:816px;top:604px;width:77px;height:25px;line-height:25px">6.04</div>
<div class="c rs rd" style="left:894px;top:604px;width:37px;height:25px;line-height:25px">胜</div>
<div class="c rs rd" style="left:932px;top:604px;width:38px;height:25px;line-height:25px">赢</div>
<div class="c rs bl" style="left:971px;top:604px;width:57px;height:25px;line-height:25px">小</div>
<div class="c lg o" style="left:2px;top:630px;width:80px;height:25px;line-height:25px">欧冠杯</div>
<div class="c" style="left:83px;top:630px;width:75px;height:25px;line-height:25px;background:#efefef">25-10-02</div>
<div class="c" style="left:159px;top:630px;width:108px;height:25px;line-height:25px;background:#efefef">圣吉罗斯(中)</div>
<div class="c" style="left:268px;top:630px;width:89px;height:25px;line-height:25px;background:#efefef"><i>0-4</i>(0-2)</div>
<div class="c" style="left:358px;top:630px;width:38px;height:25px;line-height:25px;background:#efefef">7-5</div>
<div class="c gn" style="left:397px;top:630px;width:111px;height:25px;line-height:25px;background:#efefef">纽卡斯尔联</div>
<div class="c cw" style="left:509px;top:630px;width:43px;height:25px;line-height:25px">1.00</div>
<div class="c cw" style="left:553px;top:630px;width:94px;height:25px;line-height:25px">受半球</div>
<div class="c cw" style="left:648px;top:630px;width:45px;height:25px;line-height:25px">0.88</div>
<div class="c av" style="left:694px;top:630px;width:60px;height:25px;line-height:25px">3.90</div>
<div class="c av" style="left:755px;top:630px;width:60px;height:25px;line-height:25px">3.61</div>
<div class="c av" style="left:816px;top:630px;width:77px;height:25px;line-height:25px">1.93</div>
<div class="c rs rd" style="left:894px;top:630px;width:37px;height:25px;line-height:25px;background:#efefef">胜</div>
<div class="c rs rd" style="left:932px;top:630px;width:38px;height:25px;line-height:25px;background:#efefef">赢</div>
<div class="c rs rd" style="left:971px;top:630px;width:57px;height:25px;line-height:25px;background:#efefef">大</div>
<div class="c lg r" style="left:2px;top:656px;width:80px;height:25px;line-height:25px">英超</div>
<div class="c" style="left:83px;top:656px;width:75px;height:25px;line-height:25px">25-09-28</div>
<div class="c gn" style="left:159px;top:656px;width:108px;height:25px;line-height:25px">纽卡斯尔联</div>
<div class="c" style="left:268px;top:656px;width:89px;height:25px;line-height:25px"><i>1-2</i>(1-0)</div>
<div class="c" style="left:358px;top:656px;width:38px;height:25px;line-height:25px">7-12</div>
<div class="c" style="left:397px;top:656px;width:111px;height:25px;line-height:25px">阿森纳</div>
<div class="c cw" style="left:509px;top:656px;width:43px;height:25px;line-height:25px">1.02</div>
<div class="c cw" style="left:553px;top:656px;width:94px;height:25px;line-height:25px">受平/半</div>
<div class="c cw" style="left:648px;top:656px;width:45px;height:25px;line-height:25px">0.86</div>
<div class="c av" style="left:694px;top:656px;width:60px;height:25px;line-height:25px">3.46</div>
<div class="c av" style="left:755px;top:656px;width:60px;height:25px;line-height:25px">3.29</div>
<div class="c av" style="left:816px;top:656px;width:77px;height:25px;line-height:25px">2.19</div>
<div class="c rs bl" style="left:894px;top:656px;width:37px;height:25px;line-height:25px">负</div>
<div class="c rs bl" style="left:932px;top:656px;width:38px;height:25px;line-height:25px">输</div>
<div class="c rs rd" style="left:971px;top:656px;width:57px;height:25px;line-height:25px">大</div>
<div class="c lg g" style="left:2px;top:682px;width:80px;height:25px;line-height:25px">英联杯</div>
<div class="c" style="left:83px;top:682px;width:75px;height:25px;line-height:25px;background:#efefef">25-09-25</div>
<div class="c gn" style="left:159px;top:682px;width:108px;height:25px;line-height:25px;background:#efefef">纽卡斯尔联</div>
<div class="c" style="left:268px;top:682px;width:89px;height:25px;line-height:25px;background:#efefef"><i>4-1</i>(2-0)</div>
<div class="c" style="left:358px;top:682px;width:38px;height:25px;line-height:25px;background:#efefef">6-3</div>
<div class="c" style="left:397px;top:682px;width:111px;height:25px;line-height:25px;background:#efefef">布拉德福德</div>
<div class="c cw" style="left:509px;top:682px;width:43px;height:25px;line-height:25px">1.00</div>
<div class="c cw" style="left:553px;top:682px;width:94px;height:25px;line-height:25px">两/两球半</div>
<div class="c cw" style="left:648px;top:682px;width:45px;height:25px;line-height:25px">0.88</div>
<div class="c av" style="left:694px;top:682px;width:60px;height:25px;line-height:25px">1.13</div>
<div class="c av" style="left:755px;top:682px;width:60px;height:25px;line-height:25px">8.14</div>
<div class="c av" style="left:816px;top:682px;width:77px;height:25px;line-height:25px">17.53</div>
<div class="c rs rd" style="left:894px;top:682px;width:37px;height:25px;line-height:25px;background:#efefef">胜</div>
<div class="c rs rd" style="left:932px;top:682px;width:38px;height:25px;line-height:25px;background:#efefef">赢</div>
<div class="c rs rd" style="left:971px;top:682px;width:57px;height:25px;line-height:25px;background:#efefef">大</div>
<div class="c sm" style="left:2px;top:708px;width:1026px;height:25px;line-height:25px">近<b>10</b>场,胜7平0负3, 胜率:<b>70%</b> 让胜率:<b>60%</b> 大率:<b>70%</b> 单率:<b>50%</b></div>
<div class="b" style="left:1px;top:408px;width:1028px;height:1px;background:#b4bac4"></div>
<div class="b" style="left:508px;top:428px;width:521px;height:1px;background:#b4bac4"></div>
<div class="b" style="left:82px;top:447px;width:947px;height:1px;background:#b4bac4"></div>
<div class="b" style="left:1px;top:447px;width:81px;height:1px;background:#f2f2f2"></div>
<div class="b" style="left:82px;top:473px;width:947px;height:1px"></div>
<div class="b" style="left:1px;top:473px;width:81px;height:1px;background:#f2f2f2"></div>
<div class="b" style="left:82px;top:499px;width:947px;height:1px"></div>
<div class="b" style="left:1px;top:499px;width:81px;height:1px;background:#f2f2f2"></div>
<div class="b" style="left:82px;top:525px;width:947px;height:1px"></div>
<div class="b" style="left:1px;top:525px;width:81px;height:1px;background:#f2f2f2"></div>
<div class="b" style="left:82px;top:551px;width:947px;height:1px"></div>
<div class="b" style="left:1px;top:551px;width:81px;height:1px;background:#f2f2f2"></div>
<div class="b" style="left:82px;top:577px;width:947px;height:1px"></div>
<div class="b" style="left:1px;top:577px;width:81px;height:1px;background:#f2f2f2"></div>
<div class="b" style="left:82px;top:603px;width:947px;height:1px"></div>
<div class="b" style="left:1px;top:603px;width:81px;height:1px;background:#f2f2f2"></div>
<div class="b" style="left:82px;top:629px;width:947px;height:1px"></div>
<div class="b" style="left:1px;top:629px;width:81px;height:1px;background:#f2f2f2"></div>
<div class="b" style="left:82px;top:655px;width:947px;height:1px"></div>
<div class="b" style="left:1px;top:655px;width:81px;height:1px;background:#f2f2f2"></div>
<div class="b" style="left:82px;top:681px;width:947px;height:1px"></div>
<div class="b" style="left:1px;top:681px;width:81px;height:1px;background:#f2f2f2"></div>
<div class="b" style="left:1px;top:707px;width:1028px;height:1px"></div>
<div class="b" style="left:1px;top:733px;width:1028px;height:1px"></div>
<div class="b" style="left:1px;top:408px;width:1px;height:39px;background:#b4bac4"></div>
<div class="b" style="left:1px;top:707px;width:1px;height:27px"></div>
<div class="b" style="left:1px;top:447px;width:1px;height:260px;background:#f2f2f2"></div>
<div class="b" style="left:82px;top:408px;width:1px;height:39px;background:#b4bac4"></div>
<div class="b" style="left:82px;top:447px;width:1px;height:1px"></div>
<div class="b" style="left:82px;top:707px;width:1px;height:1px"></div>
<div class="b" style="left:82px;top:448px;width:1px;height:259px;background:#f2f2f2"></div>
<div class="b" style="left:158px;top:408px;width:1px;height:39px;background:#b4bac4"></div>
<div class="b" style="left:158px;top:447px;width:1px;height:261px"></div>
<div class="b" style="left:267px;top:408px;width:1px;height:39px;background:#b4bac4"></div>
<div class="b" style="left:267px;top:447px;width:1px;height:261px"></div>
<div class="b" style="left:357px;top:408px;width:1px;height:39px;background:#b4bac4"></div>
<div class="b" style="left:357px;top:447px;width:1px;height:261px"></div>
<div class="b" style="left:396px;top:408px;width:1px;height:39px;background:#b4bac4"></div>
<div class="b" style="left:396px;top:447px;width:1px;height:261px"></div>
<div class="b" style="left:508px;top:408px;width:1px;height:39px;background:#b4bac4"></div>
<div class="b" style="left:508px;top:447px;width:1px;height:261px"></div>
<div class="b" style="left:552px;top:429px;width:1px;height:18px;background:#b4bac4"></div>
<div class="b" style="left:552px;top:448px;width:1px;height:260px"></div>
<div class="b" style="left:647px;top:429px;width:1px;height:18px;background:#b4bac4"></div>
<div class="b" style="left:647px;top:448px;width:1px;height:260px"></div>
<div class="b" style="left:693px;top:408px;width:1px;height:39px;background:#b4bac4"></div>
<div class="b" style="left:693px;top:447px;width:1px;height:261px"></div>
<div class="b" style="left:754px;top:429px;width:1px;height:18px;background:#b4bac4"></div>
<div class="b" style="left:754px;top:448px;width:1px;height:260px"></div>
<div class="b" style="left:815px;top:429px;width:1px;height:18px;background:#b4bac4"></div>
<div class="b" style="left:815px;top:448px;width:1px;height:260px"></div>
<div class="b" style="left:893px;top:408px;width:1px;height:39px;background:#b4bac4"></div>
<div class="b" style="left:893px;top:447px;width:1px;height:261px"></div>
<div class="b" style="left:931px;top:429px;width:1px;height:18px;background:#b4bac4"></div>
<div class="b" style="left:931px;top:448px;width:1px;height:260px"></div>
<div class="b" style="left:970px;top:429px;width:1px;height:18px;background:#b4bac4"></div>
<div class="b" style="left:970px;top:448px;width:1px;height:260px"></div>
<div class="b" style="left:1028px;top:408px;width:1px;height:39px;background:#b4bac4"></div>
<div class="b" style="left:1028px;top:447px;width:1px;height:287px"></div>
</body></html>
